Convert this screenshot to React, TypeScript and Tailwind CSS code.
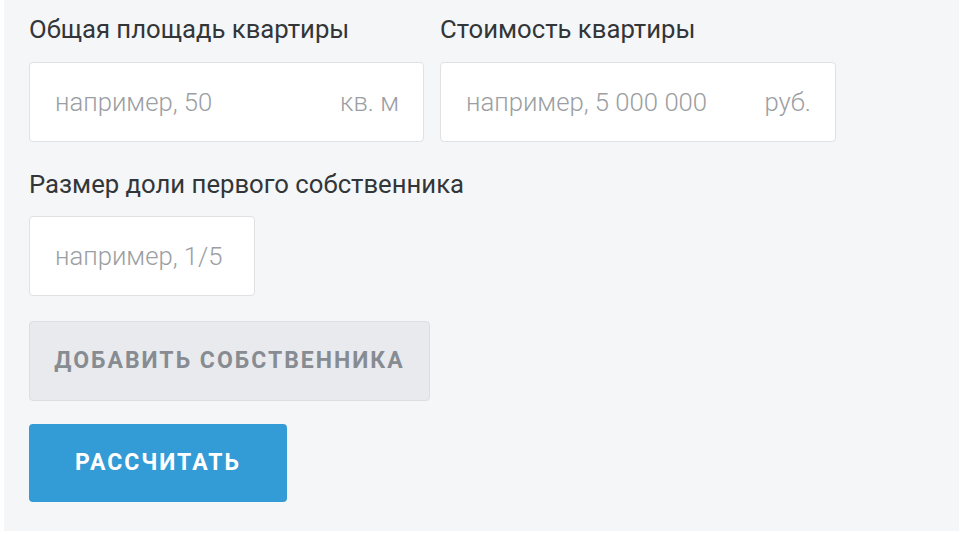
import React from 'react';

const font = { fontFamily: 'Roboto, "Liberation Sans", sans-serif' };

const Field: React.FC<{ placeholder: string; unit?: string; className?: string }> = ({
  placeholder,
  unit,
  className = '',
}) => (
  <div
    className={`flex h-[80px] items-center justify-between rounded-[4px] border border-[#dfe1e4] bg-white pl-[25px] pr-[24px] ${className}`}
  >
    <span className="text-[25.7px] font-light text-[#9b9ea2]">{placeholder}</span>
    {unit && <span className="text-[25.7px] font-light text-[#9b9ea2]">{unit}</span>}
  </div>
);

export default function App() {
  return (
    <div className="min-h-screen bg-white pl-[4px] pr-[2px]" style={font}>
      <div className="flex h-[531px] flex-col bg-[#f5f6f8] px-[25px] pt-[14px]">
        <div className="flex gap-[16px]">
          <div className="flex flex-col">
            <label className="text-[25.7px] leading-[30px] text-[#333639]">Общая площадь квартиры</label>
            <Field className="mt-[18px] w-[395px]" placeholder="например, 50" unit="кв. м" />
          </div>
          <div className="flex flex-col">
            <label className="text-[25.7px] leading-[30px] text-[#333639]">Стоимость квартиры</label>
            <Field className="mt-[18px] w-[396px]" placeholder="например, 5 000 000" unit="руб." />
          </div>
        </div>
        <label className="mt-[27px] text-[25.7px] leading-[30px] text-[#333639]">Размер доли первого собственника</label>
        <Field className="mt-[17px] w-[226px]" placeholder="например, 1/5" />
        <button className="mt-[25px] flex h-[80px] w-[401px] items-center justify-center rounded-[4px] border border-[#dcdfe2] bg-[#e8eaed] text-[23px] font-bold tracking-[2px] text-[#878c92]">
          ДОБАВИТЬ СОБСТВЕННИКА
        </button>
        <button className="mt-[23px] flex h-[78px] w-[258px] items-center justify-center rounded-[4px] bg-[#339bd5] text-[23px] font-bold tracking-[2px] text-white">
          РАССЧИТАТЬ
        </button>
      </div>
    </div>
  );
}
